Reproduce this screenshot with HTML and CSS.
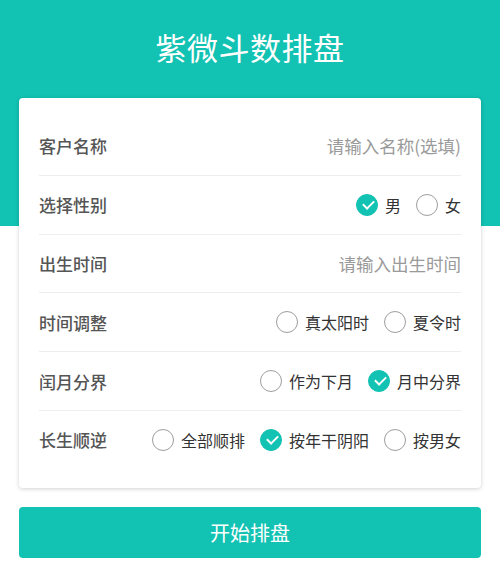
FILE: index.html
```html
<!DOCTYPE html>
<html lang="zh-CN">
  <head>
    <meta charset="UTF-8" />
    <meta name="viewport" content="width=device-width, initial-scale=1.0" />
    <title>紫微斗数排盘</title>
    <link rel="stylesheet" href="styles.css">
  </head>
  <body>
    <div class="header">
      <h1>紫微斗数排盘</h1>
    </div>

    <form class="card" id="paipanForm">
      <div class="row">
        <label>客户名称</label>
        <input type="text" id="name" placeholder="请输入名称(选填)" />
      </div>

      <div class="row">
        <label>选择性别</label>
        <div class="options">
          <span class="radio checked"><i></i>男</span>
          <span class="radio"><i></i>女</span>
        </div>
      </div>

      <div class="row">
        <label>出生时间</label>
        <input type="text" id="birth" placeholder="请输入出生时间" readonly />
      </div>

      <div class="row">
        <label>时间调整</label>
        <div class="options">
          <span class="radio"><i></i>真太阳时</span>
          <span class="radio"><i></i>夏令时</span>
        </div>
      </div>

      <div class="row">
        <label>闰月分界</label>
        <div class="options">
          <span class="radio"><i></i>作为下月</span>
          <span class="radio checked"><i></i>月中分界</span>
        </div>
      </div>

      <div class="row">
        <label>长生顺逆</label>
        <div class="options">
          <span class="radio"><i></i>全部顺排</span>
          <span class="radio checked"><i></i>按年干阴阳</span>
          <span class="radio"><i></i>按男女</span>
        </div>
      </div>
    </form>

    <button type="button" class="start-btn">开始排盘</button>
  </body>
</html>
```

FILE: styles.css
```css
body {
  margin: 0;
  background: #fff;
  font-family: "Noto Sans CJK SC", "Noto Sans", sans-serif;
}
.header {
  height: 226px;
  background: #12c2b2;
  display: flex;
  justify-content: center;
}
.header h1 {
  margin: 0;
  padding-top: 25px;
  height: 44px;
  line-height: 44px;
  font-size: 31px;
  font-weight: normal;
  color: #fff;
  letter-spacing: 0.5px;
}
.card {
  margin: -128px 19px 0;
  padding: 19px 20px 19px;
  background: #fff;
  border-radius: 4px;
  box-shadow: 0 1px 4px rgba(0, 0, 0, 0.18);
}
.row {
  display: flex;
  align-items: center;
  justify-content: space-between;
  height: 57.8px;
  border-bottom: 1px solid #eeeeee;
}
.row:last-child {
  border-bottom: none;
}
.row label {
  font-size: 17px;
  font-weight: 500;
  color: #555;
  flex-shrink: 0;
}
.row input {
  flex: 1;
  min-width: 0;
  border: none;
  outline: none;
  text-align: right;
  font-family: inherit;
  font-size: 17.5px;
  padding: 0;
  color: #333;
  background: transparent;
}
.row input::placeholder {
  color: #9a9a9a;
}
.options {
  display: flex;
  gap: 15px;
}
.radio {
  display: flex;
  align-items: center;
  gap: 7px;
  font-size: 16px;
  color: #333;
}
.radio i {
  width: 20px;
  height: 20px;
  border: 1px solid #9e9e9e;
  border-radius: 50%;
  box-sizing: content-box;
  position: relative;
}
.radio.checked i {
  background: #12c2b2;
  border-color: #12c2b2;
}
.radio.checked i::after {
  content: "";
  position: absolute;
  left: 6px;
  top: 5px;
  width: 9px;
  height: 5px;
  border-left: 2px solid #fff;
  border-bottom: 2px solid #fff;
  transform: rotate(-45deg);
}
.start-btn {
  display: block;
  width: 462px;
  height: 51px;
  margin: 19px 19px 0;
  border: none;
  border-radius: 4px;
  background: #12c2b2;
  color: #fff;
  font-family: inherit;
  font-size: 20px;
}
```
